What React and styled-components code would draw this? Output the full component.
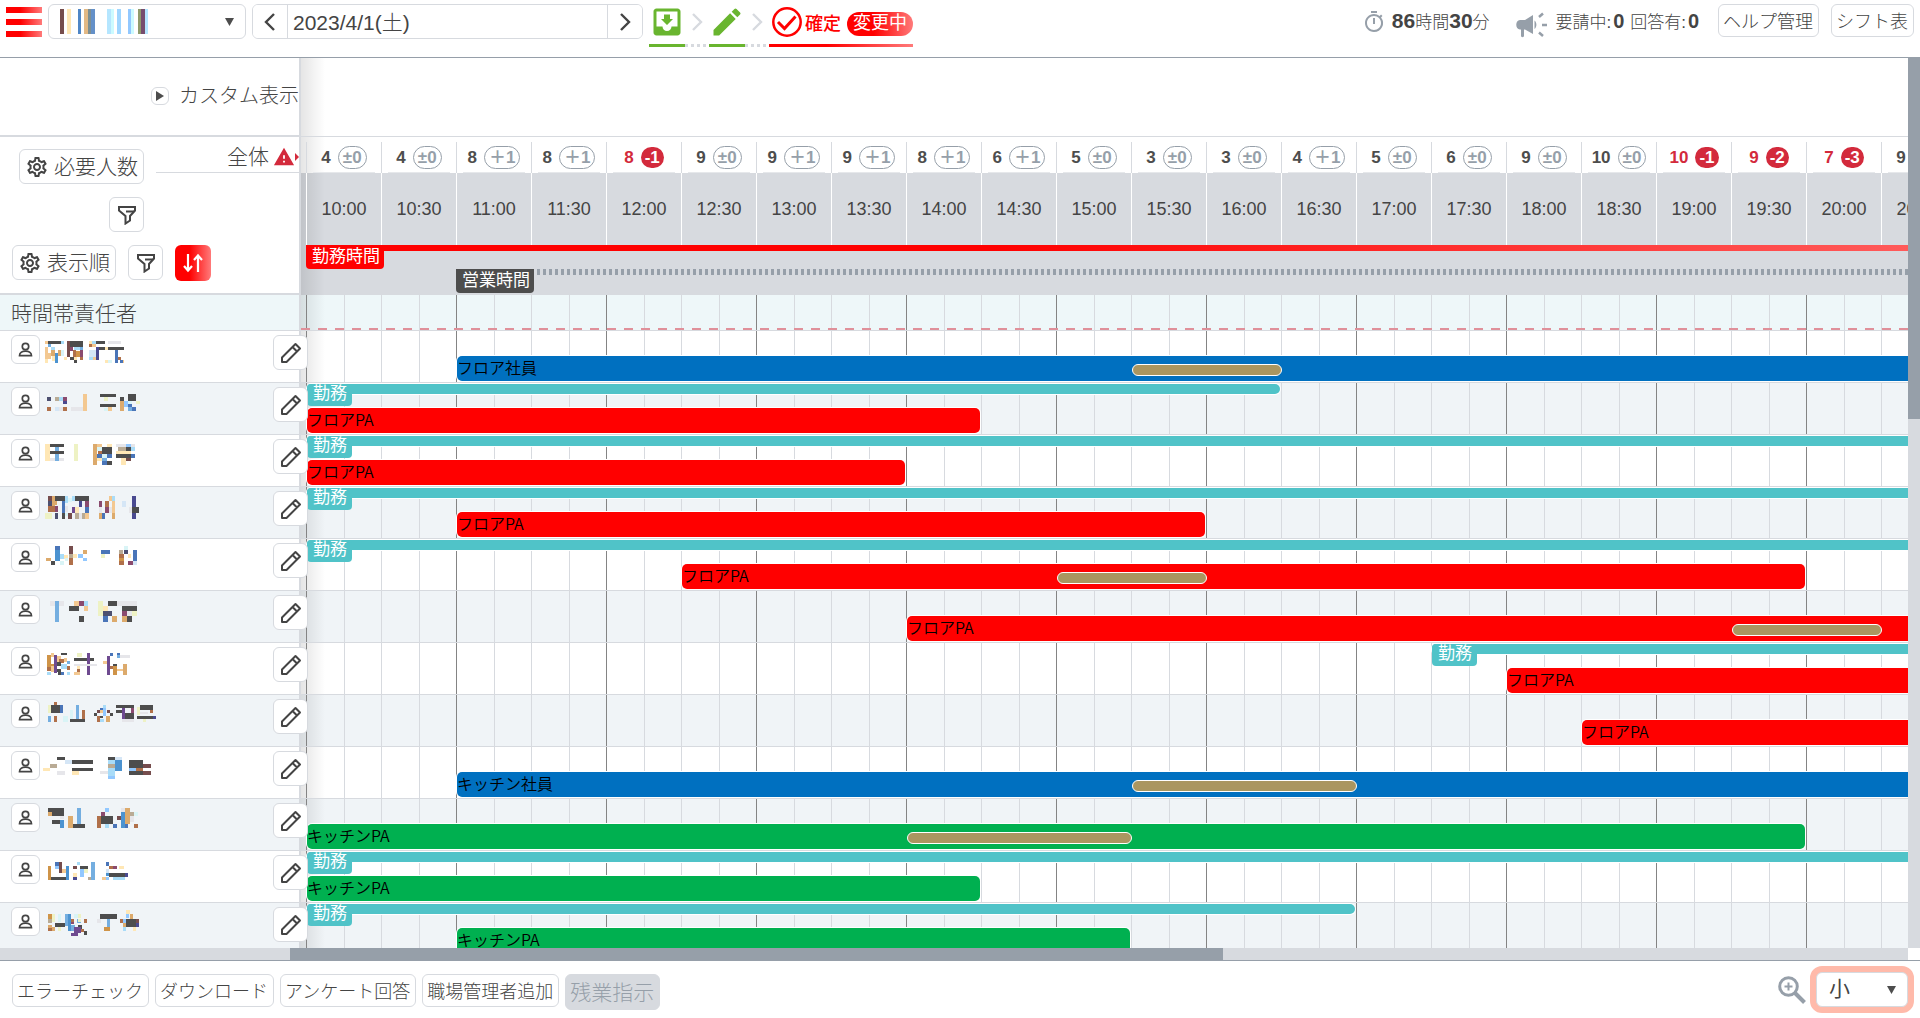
import React from 'react'
import styled, { createGlobalStyle, css } from 'styled-components'
import {
	MdMoveToInbox,
	MdEdit,
	MdOutlineTimer,
	MdOutlineSettings,
	MdWarning,
} from 'react-icons/md'

const SLOT = 75

const counts = [
	[4, '±0'], [4, '±0'], [8, '＋1'], [8, '＋1'], [8, '-1'], [9, '±0'],
	[9, '＋1'], [9, '＋1'], [8, '＋1'], [6, '＋1'], [5, '±0'], [3, '±0'],
	[3, '±0'], [4, '＋1'], [5, '±0'], [6, '±0'], [9, '±0'], [10, '±0'],
	[10, '-1'], [9, '-2'], [7, '-3'], [9, '±0'],
]

const END = counts.length

const times = counts.map((_, i) => {
	const hour = 10 + Math.floor(i / 2)
	return `${hour}:${i % 2 ? '30' : '00'}`
})

const blue = '#0070c0'
const red = '#ff0000'
const green = '#00b050'

// work, shift and rest are given in half-hour slots counted from 10:00
const staff = [
	{ shift: [2, END], color: blue, label: 'フロア社員', rest: [11, 13] },
	{ work: [0, 13], shift: [0, 9], color: red, label: 'フロアPA' },
	{ work: [0, END], shift: [0, 8], color: red, label: 'フロアPA' },
	{ work: [0, END], shift: [2, 12], color: red, label: 'フロアPA' },
	{ work: [0, END], shift: [5, 20], color: red, label: 'フロアPA', rest: [10, 12] },
	{ shift: [8, END], color: red, label: 'フロアPA', rest: [19, 21] },
	{ work: [15, END], shift: [16, END], color: red, label: 'フロアPA' },
	{ shift: [17, END], color: red, label: 'フロアPA' },
	{ shift: [2, END], color: blue, label: 'キッチン社員', rest: [11, 14] },
	{ shift: [0, 20], color: green, label: 'キッチンPA', rest: [8, 11] },
	{ work: [0, END], shift: [0, 9], color: green, label: 'キッチンPA' },
	{ work: [0, 14], shift: [2, 11], color: green, label: 'キッチンPA' },
]

const palette = {
	k: '#4d4d4d', o: '#dcaa6c', p: '#f3c891', y: '#ffe7b5', Y: '#eef2c4',
	b: '#4a75b8', s: '#74aee0', S: '#4c93d0', l: '#a9dcf8', L: '#d5e6f6',
	c: '#d9f4f6', n: '#4a4a90', v: '#6e4a90', m: '#8a4a6e', r: '#764d4d',
	R: '#b0704a', g: '#b9ab95', w: '#e6e6ea', d: '#4d5070', B: '#cf9448',
	t: '#92c8ff',
}

// masked names: top of the view box, then cells of colour key, x, y, width, height
const masks = [
	[0, 'p15 30 9 9;k24 30 39 9;l63 30 9 9;s24 39 9 9;p15 48 9 36;y15 84 9 12;p24 66 9 18;o33 57 12 18;l33 48 12 9;o54 57 9 18;S45 66 9 30;c63 57 9 18;y36 75 9 15;r81 30 9 48;k90 30 39 18;m90 48 9 12;l102 48 18 9;R99 57 9 21;B108 60 12 18;s120 48 9 9;m120 57 9 21;k90 78 12 9;y102 78 9 9;R120 78 9 9;k102 87 9 9;y72 78 9 9;y147 30 9 9;l156 30 12 9;k168 30 27 9;R147 39 12 9;p156 39 12 9;k168 48 27 9;L147 57 21 21;n168 48 9 39;l147 78 12 9;p159 78 9 9;y195 48 9 9;w204 30 39 9;k204 48 48 9;b225 57 9 39;y195 87 9 9;c204 87 12 9;R234 78 9 9;p243 87 9 9;b240 87 9 9'],
	[12, 'd21 54 12 12;g45 54 12 12;l57 54 12 12;m69 54 12 12;n69 66 12 9;R21 84 12 12;L45 84 12 12;w57 84 12 12;R69 84 12 12;w93 84 36 12;p129 45 12 51;k180 45 48 9;Y192 54 12 12;k180 75 48 9;c192 87 12 9;p204 84 12 12;k264 45 24 21;k240 54 12 12;o240 66 12 30;t252 66 12 9;c264 66 12 9;b264 75 12 9;t252 75 12 9;s264 84 12 12;b276 84 12 12;Y288 66 12 9'],
	[12, 'y15 39 15 51;k30 39 42 9;s45 48 12 12;k30 60 42 9;s45 69 12 21;w30 82 15 9;w57 82 15 9;Y102 39 12 51;o159 39 12 63;c171 48 15 12;p171 39 15 9;y201 39 15 9;k186 48 30 21;R174 60 12 9;b171 69 15 12;c186 69 15 12;b201 69 15 12;y171 81 15 9;s186 81 15 9;b186 90 15 12;k201 90 15 12;w228 39 30 9;t258 39 15 9;w273 39 12 9;g235 48 22 12;k258 48 15 12;l273 48 12 12;y228 60 45 9;k228 69 45 12;b273 69 12 12;r258 81 15 9;y243 81 15 21'],
	[12, 'r24 39 12 15;d24 54 12 15;R24 69 12 18;o36 39 9 30;k45 39 30 15;R36 69 9 18;m45 69 9 18;o36 54 15 12;l75 39 9 21;c84 45 12 12;l96 39 9 15;k105 39 42 15;b66 54 9 36;w75 69 9 18;n117 54 9 18;v96 72 9 18;y105 72 12 18;m135 54 12 18;b135 72 12 18;Y15 90 21 18;k66 90 9 18;c75 90 9 9;r84 90 12 18;g105 90 12 18;w117 90 9 18;g126 90 9 18;p135 90 12 18;d45 90 9 18;p207 39 9 15;l216 39 9 15;m177 54 9 18;R195 54 12 18;p216 54 9 18;w177 72 9 18;m195 72 12 18;w207 72 9 18;p216 72 9 18;o177 90 9 18;b186 90 9 18;o216 90 9 18;L246 54 12 18;n276 39 12 69;k273 72 24 18;w267 72 9 18'],
	[12, 'b45 33 15 12;S45 45 15 33;y72 60 12 12;l60 57 12 15;o18 69 15 9;k33 78 12 12;c60 78 12 12;r87 33 12 24;g87 57 12 12;R87 69 12 21;y99 57 12 12;t114 57 15 12;c75 69 9 9;o129 45 12 12;t129 69 12 9;b183 45 27 12;Y183 57 12 12;g237 45 12 12;d252 45 12 12;c252 33 12 12;R237 57 15 12;y264 57 9 12;B237 69 15 9;R237 78 15 12;b279 45 12 33;m264 78 15 12;L279 78 12 12'],
	[12, 'w30 42 42 15;s45 42 12 63;p102 42 15 15;m117 42 15 15;l132 42 12 15;k87 57 30 15;p132 57 12 15;k117 87 15 18;Y174 42 15 45;k204 42 27 15;w231 42 60 15;y189 57 15 15;k246 57 45 15;c204 72 12 12;d189 72 27 15;b189 87 15 18;o216 87 15 18;m246 72 15 15;w261 72 15 15;o246 87 15 18;k261 87 15 18;Y276 72 15 15'],
	[0, 'B21 36 12 36;p33 30 9 12;k63 30 18 6;v42 36 9 54;p51 39 12 18;R57 48 15 12;s81 54 9 9;k51 57 12 12;l63 63 18 15;B33 63 9 9;R21 72 12 12;p33 69 9 18;k51 78 12 9;R81 69 9 12;l21 87 12 9;k54 87 9 9;b63 87 9 9;p72 45 9 12;l81 87 9 9;Y111 30 15 12;k102 45 60 9;v141 30 9 66;w102 63 69 6;y111 69 9 12;R111 78 9 9;p102 87 18 9;b210 30 9 9;b231 30 9 9;w240 36 30 9;v201 39 9 57;s231 36 9 9;p189 54 12 9;R210 69 9 9;B219 69 12 27;k219 63 12 6;o249 63 12 33;p231 78 18 6'],
	[0, 'R42 21 9 9;Y24 30 9 24;k33 30 27 24;b60 30 9 24;s24 63 9 18;R42 63 9 18;c69 63 15 18;c90 45 9 27;s108 30 9 42;R126 45 9 27;k90 72 45 9;l189 30 9 9;b180 39 9 6;t189 39 9 24;r171 45 9 9;p180 45 9 9;k162 54 9 9;r201 45 9 9;k210 54 9 9;k180 63 9 6;R171 63 9 18;o198 63 12 18;l180 72 12 9;k228 30 54 9;k228 45 18 9;v246 39 9 33;m273 39 9 15;k255 54 27 18;w246 72 36 9;k300 30 39 15;R330 45 9 9;w300 51 24 6;Y291 36 9 24;k291 63 48 9;n339 63 9 9;Y309 72 9 9'],
	[0, 'k51 30 24 9;L75 39 21 12;k96 39 63 12;g30 51 21 12;y9 63 21 9;w51 72 24 12;k96 63 63 9;y96 72 21 12;k204 30 21 9;L225 30 21 9;l204 39 21 12;S225 39 21 33;g204 51 21 12;l204 63 21 24;t204 87 21 9;k267 39 42 24;r309 51 24 12;t267 63 21 9;R288 63 21 9;k267 72 42 12;r309 72 24 12;w180 72 24 9'],
	[0, 'k24 27 48 12;o24 39 12 12;k36 39 36 12;w60 51 12 9;k36 63 24 12;S60 63 12 24;s111 27 12 48;o84 51 15 36;k99 75 36 12;t195 27 12 12;m183 39 12 12;k183 51 36 24;R171 51 12 36;l195 75 12 12;b219 75 12 12;S243 39 12 48;r231 51 12 12;o255 27 15 48;w243 27 12 12;g270 39 12 12;c282 39 12 12;w270 51 12 18;b255 75 9 12;R282 75 12 12'],
	[0, 'B24 45 9 42;k33 78 45 9;b45 33 12 12;t45 45 12 9;r57 33 9 33;p66 54 12 12;S78 45 9 42;r99 45 12 9;k120 45 24 9;y99 66 12 12;t120 54 12 24;n99 78 12 9;l111 33 9 9;Y132 54 12 12;s153 33 12 54;g144 78 9 9;b198 33 9 12;R207 45 12 9;m219 45 12 9;y237 45 15 9;L198 54 9 12;k207 66 48 12;n255 66 9 12;p186 78 12 9;t198 78 9 9;l219 78 36 9;S198 66 9 9'],
	[0, 'B24 33 12 18;o24 66 12 12;R24 75 12 9;Y36 33 9 24;c54 33 9 24;s75 33 9 36;g24 48 12 12;o36 72 9 12;S84 33 9 51;k45 60 30 12;Y54 72 9 12;m93 54 9 9;s93 66 12 18;c102 33 12 12;Y114 33 9 12;R132 48 9 12;s111 48 12 12;R93 48 9 9;k114 66 12 12;v102 72 21 18;v93 90 12 9;k132 84 9 12;v105 87 9 12;R123 78 9 9;Y114 48 9 9;k180 33 51 15;w171 48 12 12;s201 48 9 24;B192 72 18 12;y258 21 12 12;t258 33 9 12;o270 33 9 15;R240 48 12 12;t249 48 9 12;k258 48 30 24;r288 48 9 12;o249 60 9 12;n288 60 9 12;l249 72 9 12;y279 72 9 12'],
]

const Mask = ({ top, cells }) => (
	<MaskSvg viewBox={`0 ${top} 390 111`} shapeRendering="crispEdges" aria-hidden="true">
		{cells.split(';').map((cell, i) => {
			const [x, y, width, height] = cell.slice(1).split(' ')
			return (
				<rect
					key={i}
					x={x}
					y={y}
					width={width}
					height={height}
					fill={palette[cell[0]]}
				/>
			)
		})}
	</MaskSvg>
)

const storeStripes = [
	[0, 4, '#764d4d'], [7, 4, '#ffe7b5'], [18, 3, '#4f86c6'], [24, 4, '#e3b985'],
	[28, 3, '#7d8f93'], [31, 4, '#6490c8'], [47, 4, '#b5e6ff'], [51, 3, '#ccfbff'],
	[57, 4, '#9fd6ff'], [68, 3, '#92c8ff'], [71, 3, '#ccfbff'], [78, 3, '#8f9b6c'],
	[81, 4, '#764d6e'], [85, 3, '#b5e6ff'],
]

const Chevron = ({ flip }) => (
	<svg width="12" height="20" viewBox="0 0 12 20" fill="none" stroke="currentColor" strokeWidth="2.4" aria-hidden="true">
		<path d={flip ? 'M2 2l8 8-8 8' : 'M10 2l-8 8 8 8'} />
	</svg>
)

const Caret = () => (
	<CaretSvg width="9" height="8" viewBox="0 0 9 8" aria-hidden="true">
		<path d="M0 0h9L4.500 8z" fill="#4d4d4d" />
	</CaretSvg>
)

const FilterIcon = () => (
	<svg width="20" height="20" viewBox="0 0 20 20" fill="none" stroke="currentColor" strokeWidth="2" aria-hidden="true">
		<path d="M2 2h16v3.500l-5 5.500v4.500l-4.500 3v-7.500L2 5.500z" />
		<path d="M9 6.500h8" />
	</svg>
)

const PersonIcon = () => (
	<svg width="15" height="15" viewBox="0 0 15 15" fill="none" stroke="currentColor" strokeWidth="1.700" aria-hidden="true">
		<circle cx="7.500" cy="4.500" r="3.200" />
		<path d="M1.500 13.700h12c0-6-12-6-12 0z" />
	</svg>
)

const PencilIcon = () => (
	<svg width="22" height="22" viewBox="0 0 22 22" fill="none" stroke="currentColor" strokeWidth="2" strokeLinejoin="round" aria-hidden="true">
		<path d="M2 20v-4.500L15.500 2l4.500 4.500L6.500 20zM12.500 5l4.500 4.500M15 3.500" />
	</svg>
)

const SortIcon = () => (
	<svg width="20" height="20" viewBox="0 0 20 20" fill="none" stroke="#fff" strokeWidth="2.200" aria-hidden="true">
		<path d="M5 1v16M1 13l4 4.500L9 13M15 19V3M11 7l4-4.500L19 7" />
	</svg>
)

const MegaphoneIcon = () => (
	<svg width="31" height="26" viewBox="0 0 31 26" fill="#969fa9" aria-hidden="true">
		<path d="M4 8h5l8-5v19l-8-4.500H8V24c0 1.500-3 1.500-3 0v-6.500H4c-5 0-5-9.500 0-9.500z" />
		<path d="M18.500 8.500c2.500 2 2.500 6.500 0 8.500z" />
		<path d="M23 5l4-3.500M26 13h5M23 20.500l4 3.500" stroke="#969fa9" strokeWidth="2.500" />
	</svg>
)

const CheckCircle = () => (
	<svg width="30" height="30" viewBox="0 0 30 30" fill="none" stroke="#ff0000" aria-hidden="true">
		<circle cx="15" cy="15" r="13.700" strokeWidth="2.500" />
		<path d="M6 15l6.500 6.500L23.500 9.500" strokeWidth="3" />
	</svg>
)

const ZoomIcon = () => (
	<svg width="28" height="28" viewBox="0 0 28 28" fill="none" stroke="#969fa9" aria-hidden="true">
		<circle cx="10.500" cy="10.500" r="8.800" strokeWidth="3" />
		<path d="M17 17l9.500 9.500" strokeWidth="4" />
		<path d="M10.500 6.500v8M6.500 10.500h8" strokeWidth="2" />
	</svg>
)

const App = () => {
	return (
		<React.Fragment>
			<GlobalStyle />
			<Page>
				<Header>
					<HeaderGroup>
						<MenuButton aria-label="メニュー">
							<i />
							<i />
							<i />
						</MenuButton>
						<SelectBox $width={198}>
							<select aria-label="店舗">
								<option />
							</select>
							<StoreMask width="88" height="25" viewBox="0 0 88 25" aria-hidden="true">
								{storeStripes.map(([x, width, fill]) => (
									<rect key={x} x={x} y="0" width={width} height="25" fill={fill} />
								))}
							</StoreMask>
							<Caret />
						</SelectBox>
						<DateBox>
							<button aria-label="前の日">
								<Chevron />
							</button>
							<input aria-label="日付" defaultValue="2023/4/1(土)" />
							<button aria-label="次の日">
								<Chevron flip />
							</button>
						</DateBox>
						<Steps>
							<Step $done>
								<MdMoveToInbox size={36} />
							</Step>
							<StepArrow>
								<Chevron flip />
							</StepArrow>
							<Step $done>
								<MdEdit size={36} />
							</Step>
							<StepArrow>
								<Chevron flip />
							</StepArrow>
							<Step>
								<CheckCircle />
								<strong>確定</strong>
								<Pill>変更中</Pill>
							</Step>
						</Steps>
					</HeaderGroup>
					<HeaderGroup>
						<WorkTotal>
							<MdOutlineTimer size={24} color="#969fa9" />
							<span>
								<b>86</b>時間<b>30</b>分
							</span>
						</WorkTotal>
						<Requests>
							<MegaphoneIcon />
							<span>
								要請中:<b>0</b> 回答有:<b>0</b>
							</span>
						</Requests>
						<TextButton>ヘルプ管理</TextButton>
						<TextButton>シフト表</TextButton>
					</HeaderGroup>
				</Header>

				<Board>
					<BoardBody>
						<Side>
							<CustomView>
								<ExpandButton aria-label="カスタム表示を開く">
									<svg width="8" height="10" viewBox="0 0 8 10" aria-hidden="true">
										<path d="M0 0l8 5-8 5z" fill="#4d4d4d" />
									</svg>
								</ExpandButton>
								カスタム表示
							</CustomView>
							<Controls>
								<ControlRow $left={19}>
									<ToolButton $width={125}>
										<MdOutlineSettings size={24} />
										必要人数
									</ToolButton>
									<Total>
										全体
										<MdWarning size={22} color="#d32a3c" />
										<svg width="4" height="8" viewBox="0 0 4 8" aria-hidden="true">
											<path d="M0 0l4 4-4 4z" fill="#d32a3c" />
										</svg>
									</Total>
								</ControlRow>
								<ControlRow $left={109}>
									<ToolButton $width={35} aria-label="必要人数の絞り込み">
										<FilterIcon />
									</ToolButton>
								</ControlRow>
								<ControlRow $left={12}>
									<ToolButton $width={104}>
										<MdOutlineSettings size={24} />
										表示順
									</ToolButton>
									<ToolButton $width={35} aria-label="表示順の絞り込み">
										<FilterIcon />
									</ToolButton>
									<SortButton aria-label="並べ替え">
										<SortIcon />
									</SortButton>
								</ControlRow>
							</Controls>
							<Manager>時間帯責任者</Manager>
							{masks.map(([top, cells], i) => (
								<StaffRow key={i} $odd={i % 2}>
									<UserButton aria-label="スタッフ詳細">
										<PersonIcon />
									</UserButton>
									<Mask top={top} cells={cells} />
									<EditButton aria-label="シフト編集">
										<PencilIcon />
									</EditButton>
								</StaffRow>
							))}
						</Side>

						<Timeline>
							<TopSpace />
							<Counts>
								{counts.map(([count, diff], i) => (
									<Count key={i} $short={diff[0] === '-'}>
										<b>{count}</b>
										<Diff $short={diff[0] === '-'}>{diff}</Diff>
									</Count>
								))}
							</Counts>
							<Times>
								{times.map((time) => (
									<Time key={time}>{time}</Time>
								))}
							</Times>
							<HourStrips>
								<Strip $start={1}>
									<StripLabel $color={red}>勤務時間</StripLabel>
									<SolidLine />
								</Strip>
								<Strip $start={3}>
									<StripLabel $color="#4d4d4d">営業時間</StripLabel>
									<DottedLine />
								</Strip>
							</HourStrips>
							<ManagerTrack />
							{staff.map(({ work, shift, rest, color, label }, i) => (
								<Track key={i} $odd={i % 2}>
									{work && (
										<Work $from={work[0]} $to={work[1]}>
											<WorkLabel>勤務</WorkLabel>
										</Work>
									)}
									<Shift $from={shift[0]} $to={shift[1]} $color={color}>
										{label}
									</Shift>
									{rest && <Rest $from={rest[0]} $to={rest[1]} />}
								</Track>
							))}
						</Timeline>
					</BoardBody>
					<VScroll />
					<HScroll />
				</Board>

				<Footer>
					<FooterButtons>
						<TextButton>エラーチェック</TextButton>
						<TextButton>ダウンロード</TextButton>
						<TextButton>アンケート回答</TextButton>
						<TextButton>職場管理者追加</TextButton>
						<DisabledButton disabled>残業指示</DisabledButton>
					</FooterButtons>
					<Zoom>
						<ZoomIcon />
						<Ring>
							<SelectBox $width={92}>
								<select aria-label="表示サイズ">
									<option>小</option>
								</select>
								<Caret />
							</SelectBox>
						</Ring>
					</Zoom>
				</Footer>
			</Page>
		</React.Fragment>
	)
}

const line = '#d7dadf'
const fade = 'linear-gradient(90deg, #ff0000 40%, #ff7a7a 100%)'

const GlobalStyle = createGlobalStyle`
	* {
		box-sizing: border-box;
	}
	body {
		margin: 0;
		background: #fff;
	}
	body, button, input, select {
		color: #444;
		font-family: "Liberation Sans", "Noto Sans CJK JP", sans-serif;
		font-weight: 300;
	}
	b {
		font-weight: 700;
	}
	button {
		padding: 0;
		background: #fff;
		border: 1px solid ${line};
		border-radius: 6px;
		white-space: nowrap;
	}
	svg {
		flex: none;
		display: block;
	}
`

const Page = styled.div`
	display: flex;
	flex-direction: column;
	height: 100vh;
	overflow: hidden;
`

const Header = styled.header`
	flex: none;
	display: flex;
	justify-content: space-between;
	height: 58px;
	padding: 4px 6px 0;
	border-bottom: 1px solid #969fa9;
`

const HeaderGroup = styled.div`
	display: flex;
	align-items: flex-start;
	white-space: nowrap;
`

const MenuButton = styled.button`
	display: grid;
	gap: 6px;
	width: 36px;
	margin: 3px 6px 0 0;
	border: 0;
	border-radius: 0;

	i {
		height: 6px;
		background: ${fade};
	}
`

const SelectBox = styled.div`
	display: grid;
	align-items: center;
	width: ${({ $width }) => $width}px;

	> * {
		grid-area: 1 / 1;
	}
	select {
		width: 100%;
		height: 35px;
		padding: 0 12px 2px;
		appearance: none;
		background: #fff;
		border: 1px solid ${line};
		border-radius: 6px;
		font-size: 21px;
		font-weight: 400;
	}
`

const StoreMask = styled.svg`
	margin-left: 12px;
	pointer-events: none;
`

const CaretSvg = styled.svg`
	justify-self: end;
	margin-right: 12px;
	pointer-events: none;
`

const DateBox = styled.div`
	display: flex;
	width: 391px;
	height: 35px;
	margin-left: 6px;
	border: 1px solid ${line};
	border-radius: 6px;
	overflow: hidden;

	button {
		display: grid;
		place-items: center;
		width: 34px;
		border: 0;
		border-radius: 0;
	}
	input {
		flex: 1;
		min-width: 0;
		padding: 0 5px 2px;
		border: 1px solid ${line};
		border-width: 0 1px;
		font-size: 21px;
	}
`

const Steps = styled.div`
	display: flex;
	margin-left: 6px;
`

const Step = styled.div`
	display: flex;
	align-items: center;
	height: 43px;
	padding-bottom: 7px;
	padding-left: ${({ $done }) => ($done ? 0 : 3)}px;
	color: ${({ $done }) => ($done ? '#69b52f' : red)};
	background: ${({ $done }) => ($done ? 'linear-gradient(#69b52f, #69b52f)' : fade)} bottom / 100% 3px no-repeat;

	strong {
		margin-left: 3px;
		font-size: 18px;
		font-weight: 500;
	}
`

const StepArrow = styled.div`
	display: flex;
	justify-content: center;
	width: 24px;
	height: 43px;
	padding-top: 8px;
	color: ${line};
	background: repeating-linear-gradient(90deg, ${line} 0 3px, transparent 3px 6px) bottom / 100% 3px no-repeat;
`

const Pill = styled.span`
	height: 24px;
	margin-top: 4px;
	margin-left: 6px;
	padding: 0 6px;
	border-radius: 12px;
	background: ${fade};
	color: #fff;
	font-size: 18px;
	font-weight: 400;
	line-height: 22px;
`

const Info = styled.div`
	display: flex;
	align-items: center;
	height: 36px;
	font-size: 17px;
	line-height: 34px;
`

const WorkTotal = styled(Info)`
	gap: 6px;
	margin-right: 26px;

	b {
		font-size: 21px;
	}
`

const Requests = styled(Info)`
	gap: 9px;
	margin-right: 18px;

	svg {
		margin-top: 6px;
	}
	b {
		margin: 0 1px 0 2px;
		font-size: 20px;
	}
`

const TextButton = styled.button`
	height: 33px;
	padding: 0 5px 2px 4px;
	font-size: 18px;

	${HeaderGroup} > & + & {
		margin-left: 12px;
	}
`

const Board = styled.main`
	flex: 1;
	min-height: 0;
	display: grid;
	grid-template-columns: minmax(0, 1fr) 12px;
	grid-template-rows: minmax(0, 1fr) 12px;
`

const BoardBody = styled.div`
	display: flex;
	overflow: hidden;
`

const VScroll = styled.div`
	background: linear-gradient(#969fa9, #969fa9) top / 100% 361px no-repeat ${line};
`

const HScroll = styled.div`
	background: linear-gradient(#969fa9, #969fa9) 290px 0 / 933px 100% no-repeat ${line};
`

const Side = styled.aside`
	z-index: 1;
	flex: none;
	width: 301px;
	height: max-content;
	background: #fff;
	border-right: 2px solid ${line};
	font-size: 21px;
`

const CustomView = styled.div`
	display: flex;
	align-items: center;
	justify-content: flex-end;
	gap: 10px;
	height: 79px;
	padding-bottom: 2px;
	border-bottom: 2px solid ${line};
	font-size: 20px;
	line-height: 24px;
`

const ExpandButton = styled.button`
	display: grid;
	place-items: center;
	width: 18px;
	height: 18px;
`

const Controls = styled.div`
	display: flex;
	flex-direction: column;
	gap: 13px;
	height: 158px;
	padding-top: 12px;
	border-bottom: 2px solid ${line};
`

const ControlRow = styled.div`
	display: flex;
	gap: 12px;
	height: 35px;
	padding-left: ${({ $left }) => $left}px;
`

const ToolButton = styled.button`
	display: flex;
	align-items: center;
	justify-content: center;
	gap: 5px;
	width: ${({ $width }) => $width}px;
	height: 35px;
	font-size: 21px;
	line-height: 30px;
`

const SortButton = styled(ToolButton)`
	width: 36px;
	height: 36px;
	border: 0;
	background: ${fade};
`

const Total = styled.div`
	flex: 1;
	display: flex;
	align-items: center;
	justify-content: flex-end;
	height: 24px;
	padding-bottom: 8px;
	border-bottom: 1px solid ${line};
	line-height: 24px;

	svg:first-of-type {
		margin-left: 4px;
	}
`

const Manager = styled.div`
	height: 36px;
	padding-left: 11px;
	border-bottom: 1px solid ${line};
	background: #eef7f9;
	line-height: 37px;
`

const StaffRow = styled.div`
	display: flex;
	height: 52px;
	padding: 4px 0 0 11px;
	border-bottom: 1px solid ${line};
	background: ${({ $odd }) => ($odd ? '#f0f4f7' : '#fff')};
`

const UserButton = styled.button`
	display: grid;
	place-items: center;
	width: 29px;
	height: 29px;
`

const MaskSvg = styled.svg`
	width: 130px;
	height: 37px;
	margin-top: -4px;
`

const EditButton = styled.button`
	display: grid;
	place-items: center;
	width: 35px;
	height: 35px;
	margin-left: auto;
	margin-right: -9px;
`

const Timeline = styled.section`
	flex: 1;
	min-width: 0;
	overflow: hidden;
`

const shade = 'linear-gradient(90deg, rgba(0, 0, 0, 0.1), transparent) 0 0 / 24px 100% no-repeat'

const TopSpace = styled.div`
	height: 79px;
	border-bottom: 1px solid ${line};
	background: ${shade};
`

const Counts = styled.div`
	display: flex;
	height: 36px;
	padding: 5px 0 0 5px;
	background: ${shade};
`

const Count = styled.div`
	flex: none;
	display: flex;
	align-items: center;
	justify-content: center;
	gap: 7px;
	width: ${SLOT}px;
	border-left: 1px solid ${line};
	background: linear-gradient(#e6e8eb, #e6e8eb) center bottom / 62px 1px no-repeat;
	color: ${({ $short }) => ($short ? '#d32a3c' : '#4d4d4d')};
	font-size: 17px;
`

const Diff = styled.span`
	padding: 0 4px;
	border: 1px solid #969fa9;
	border-radius: 12px;
	color: #969fa9;
	font-weight: 700;
	line-height: 21px;

	${({ $short }) =>
		$short &&
		css`
			border: 0;
			background: #d32a3c;
			color: #fff;
		`}
`

const Times = styled.div`
	display: flex;
	height: 72px;
	padding-left: 5px;
	background: ${shade} ${line};
`

const Time = styled.div`
	flex: none;
	width: ${SLOT}px;
	border-left: 1px solid #fff;
	font-size: 18px;
	line-height: 72px;
	text-align: center;
`

const HourStrips = styled.div`
	height: 50px;
	padding-left: 5px;
	background: ${shade} ${line};
`

const Strip = styled.div`
	display: flex;
	height: 24px;
	margin-left: ${({ $start }) => ($start - 1) * SLOT}px;
`

const StripLabel = styled.span`
	padding: 0 4px 0 6px;
	border-radius: 0 0 4px 4px;
	background: ${({ $color }) => $color};
	color: #fff;
	font-size: 17px;
	font-weight: 400;
	line-height: 23px;
	white-space: nowrap;
`

const SolidLine = styled.div`
	flex: 1;
	height: 6px;
	background: linear-gradient(90deg, #ff0000 40%, #ff5a5a);
`

const DottedLine = styled.div`
	flex: 1;
	height: 6px;
	margin-left: 3px;
	background: repeating-linear-gradient(90deg, #969fa9 0 3px, transparent 3px 6px);
`

// one dark line per hour, three pale ones between
const gridLines = `repeating-linear-gradient(90deg,
	#848484 0 1px, transparent 1px 38px,
	${line} 38px 39px, transparent 39px 75px,
	${line} 75px 76px, transparent 76px 113px,
	${line} 113px 114px, transparent 114px 150px) 5px 0 / 3000px 100% no-repeat`

const ManagerTrack = styled.div`
	height: 36px;
	border-bottom: 1px solid ${line};
	background:
		repeating-linear-gradient(90deg, #e0909a 0 9px, transparent 9px 17px) 0 33px / 100% 2px no-repeat,
		${gridLines},
		${shade} #eef7f9;
`

const Track = styled.div`
	display: grid;
	grid-template-columns: repeat(${END}, ${SLOT}px);
	grid-template-rows: 25px 25px;
	height: 52px;
	padding-left: 5px;
	border-bottom: 1px solid ${line};
	background: ${gridLines}, ${shade} ${({ $odd }) => ($odd ? '#f0f4f7' : '#fff')};
`

const span = css`
	grid-column: ${({ $from, $to }) => `${$from + 1} / ${$to + 1}`};
	margin-left: 1px;
`

const Work = styled.div`
	${span}
	grid-row: 1;
	height: 10px;
	margin-top: 1px;
	margin-right: 1px;
	border-radius: 4px 5px 5px 4px;
	background: #50c3c8;
	box-shadow: 0 0 0 1px #fff;
`

const WorkLabel = styled.div`
	width: max-content;
	height: 22px;
	padding: 0 5px 0 6px;
	border-radius: 4px;
	background: #50c3c8;
	color: #fff;
	font-size: 17px;
	font-weight: 400;
	line-height: 20px;
`

const Shift = styled.div`
	${span}
	grid-row: 2;
	margin-right: 1px;
	border-radius: 5px;
	background: ${({ $color }) => $color};
	box-shadow: 0 0 0 1px #fff;
	color: #000;
	font-family: "Noto Sans CJK JP", sans-serif;
	font-size: 16px;
	font-weight: 350;
	line-height: 22px;
	white-space: nowrap;
`

const Rest = styled.div`
	${span}
	grid-row: 2;
	height: 12px;
	margin-top: 8px;
	margin-right: -1px;
	border: 1px solid #fff;
	border-radius: 6px;
	background: #aa9660;
`

const Footer = styled.footer`
	flex: none;
	display: flex;
	justify-content: space-between;
	height: 58px;
	padding: 5px 6px 0 12px;
	border-top: 1px solid #969fa9;
`

const FooterButtons = styled.div`
	display: flex;
	align-items: flex-start;
	gap: 6px;
	padding-top: 8px;
`

const DisabledButton = styled.button`
	height: 36px;
	padding: 0 5px 2px 4px;
	background: ${line};
	color: #969fa9;
	font-size: 21px;
`

const Zoom = styled.div`
	display: flex;
	align-items: center;
	gap: 4px;
	height: 47px;
`

const Ring = styled.div`
	border: 6px solid #ffbaaa;
	border-radius: 12px;
	background: #ffbaaa;
`

export default App
